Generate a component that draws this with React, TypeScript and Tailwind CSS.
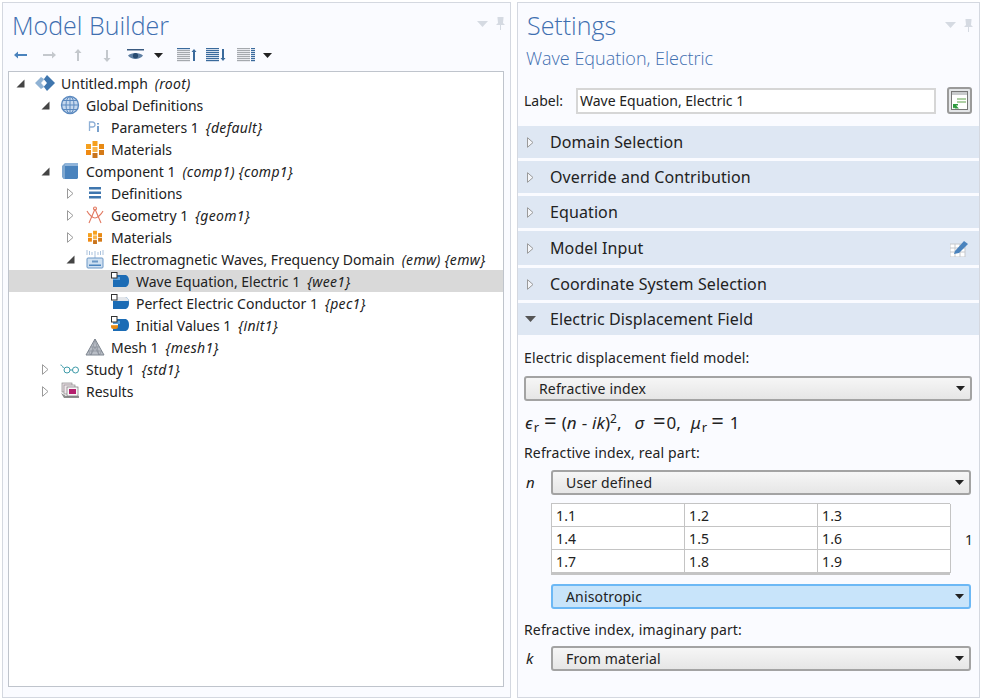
import type { ReactNode } from "react";

const SANS = "font-['Noto_Sans','Open_Sans',sans-serif]";

function Globe() {
  return (
    <svg width="20" height="20" viewBox="0 0 20 20" fill="none">
      <circle cx="10" cy="10" r="8.5" fill="#c5d8ee" stroke="#5b89bf" strokeWidth="1.4" />
      <ellipse cx="10" cy="10" rx="4" ry="8.5" stroke="#5b89bf" />
      <path d="M10 1.500v17M1.500 10h17M3 5.500h14M3 14.500h14" stroke="#5b89bf" />
    </svg>
  );
}

function RootIcon() {
  return (
    <svg width="22" height="18" viewBox="0 0 22 18" className="shrink-0">
      <path d="M7 9l6-8 8 8-8 8z" fill="#3f76ae" />
      <path d="M1 9l6-6 3 2-3 4 3 4-3 2z" fill="#8fb2d4" />
      <path d="M7 9l3-3.500 3 3.500-3 3.500z" fill="#ffffff" />
    </svg>
  );
}

function ParamIcon() {
  return (
    <svg width="14" height="14" viewBox="0 0 14 14">
      <path d="M1.500 11V2h3a2.200 2.200 0 010 5h-3" fill="none" stroke="#8fb0d6" strokeWidth="1.300" />
      <path d="M10 6v6" stroke="#4d82bd" strokeWidth="1.500" />
      <path d="M10 3v1.500" stroke="#4d82bd" strokeWidth="1.500" />
    </svg>
  );
}

function MaterialIcon({ small }: { small?: boolean }) {
  const s = small ? 14 : 18;
  return (
    <svg width={s} height={s} viewBox="0 0 18 18">
      <rect x="0" y="4" width="5" height="5" fill="#f5a01e" />
      <rect x="0" y="10" width="5" height="5" fill="#f08a12" />
      <rect x="6.500" y="1" width="5" height="5" fill="#f5a01e" />
      <rect x="6.500" y="7" width="5" height="5" fill="#f9b54a" />
      <rect x="6.500" y="13" width="5" height="5" fill="#c9741c" />
      <rect x="13" y="4" width="5" height="5" fill="#e88a14" />
      <rect x="13" y="10" width="5" height="5" fill="#d47a18" />
    </svg>
  );
}

function CubeIcon() {
  return (
    <svg width="16" height="16" viewBox="0 0 16 16">
      <path d="M3 0h13v3H3z" fill="#8fb4da" />
      <path d="M0 3l3-3v16l-1.500 0L0 14z" fill="#7ea7d0" />
      <path d="M3 3h13v12l-1 1H3z" fill="#4a83bd" />
    </svg>
  );
}

function DefsIcon() {
  return (
    <svg width="14" height="12" viewBox="0 0 14 12">
      <path d="M1 0h12v2.500H1zM1 4.500h12V7H1zM1 9h12v2.500H1z" fill="#3f76ae" />
    </svg>
  );
}

function GeomIcon() {
  return (
    <svg width="18" height="18" viewBox="0 0 18 18" fill="none" stroke="#e27a62" strokeWidth="1.100">
      <path d="M9 3L3 17M9 3l6 14" />
      <circle cx="9" cy="2.500" r="1.500" />
      <path d="M1 5c2 4 6 7 8 7s6-3 8-7" />
    </svg>
  );
}

function EmwIcon() {
  return (
    <svg width="18" height="20" viewBox="0 0 18 20">
      <path d="M1 1v5M3.500 2v4M6 3v3M12 3v3M14.500 2v4M17 1v5M9 2v8" stroke="#a9c1dc" strokeWidth="1" />
      <rect x="1" y="9" width="16" height="10" rx="1" fill="#cfe0f1" stroke="#6b97c6" />
      <rect x="3" y="15.500" width="12" height="1.500" fill="#4a83bd" />
      <rect x="6" y="11.500" width="6" height="2" fill="#6b97c6" />
    </svg>
  );
}

function NodeIcon({ kind }: { kind: "wee" | "pec" | "init" }) {
  return (
    <svg width="18" height="18" viewBox="0 0 18 18">
      <path d="M2 3h12c2.500 0 4 2.500 4 6s-1.500 6-4 6H2z" fill="#1c6cb5" />
      {kind === "pec" ? <path d="M2 3h12c2 0 3.200 1.500 3.700 4H2z" fill="#e3e6ea" /> : null}
      {kind !== "pec" ? <path d="M2 5h7v3H2z" fill="#5aa0dc" /> : null}
      <rect x="0.500" y="0.500" width="5.500" height="5.500" fill="#fff" stroke="#333" />
      {kind === "init" ? <path d="M0 8h7v2.500a2.500 2.500 0 01-2.500 2.500h-2A2.500 2.500 0 010 10.500z" fill="#e88a14" /> : null}
      {kind === "init" ? <path d="M0 8h7v1.200H0z" fill="#fff" /> : null}
    </svg>
  );
}

function MeshIcon() {
  return (
    <svg width="20" height="18" viewBox="0 0 20 18">
      <path d="M10 1L1 17h18z" fill="#b9bec6" stroke="#7f8791" />
      <path d="M10 1l-4 16M10 1l4 16M5.500 9h9M3.500 13h13M6 17l4-8 4 8M3.500 13l2 4M16.500 13l-2 4" fill="none" stroke="#7f8791" strokeWidth="0.600" />
    </svg>
  );
}

function StudyIcon() {
  return (
    <svg width="20" height="10" viewBox="0 0 20 10" fill="none" stroke="#3d9aa8" strokeWidth="1">
      <path d="M0.500 1c1 0 2 1 3 3" />
      <circle cx="7" cy="6" r="3" />
      <circle cx="15.500" cy="6" r="3" />
      <path d="M10 6h2.500" />
    </svg>
  );
}

function ResultsIcon() {
  return (
    <svg width="20" height="18" viewBox="0 0 20 18">
      <path d="M1 11l3 5h15v-2H6z" fill="#8d8d8d" />
      <rect x="2" y="1" width="10" height="9" fill="#e9dde3" stroke="#8a8a8a" strokeWidth="0.700" />
      <rect x="4" y="3" width="11" height="9" fill="#f1e7ec" stroke="#8a8a8a" strokeWidth="0.700" />
      <rect x="7" y="5" width="11" height="9" fill="#f7f7f7" stroke="#777" strokeWidth="0.700" />
      <rect x="9" y="7" width="7" height="5" fill="#b5206e" />
    </svg>
  );
}

function Open() {
  return (
    <svg width="9" height="9" viewBox="0 0 9 9">
      <path d="M8.500 0.500v8h-8z" fill="#444" />
    </svg>
  );
}

function Closed() {
  return (
    <svg width="7" height="11" viewBox="0 0 7 11">
      <path d="M0.500 0.700L6 5.500 0.500 10.300z" fill="#fff" stroke="#9a9a9a" />
    </svg>
  );
}

type Row = {
  level: 0 | 1 | 2 | 3;
  arrow?: "open" | "closed";
  icon: ReactNode;
  name: string;
  tag?: string;
  selected?: boolean;
};

const ROWS: Row[] = [
  { level: 0, arrow: "open", icon: <RootIcon />, name: "Untitled.mph", tag: "(root)" },
  { level: 1, arrow: "open", icon: <Globe />, name: "Global Definitions" },
  { level: 2, icon: <ParamIcon />, name: "Parameters 1", tag: "{default}" },
  { level: 2, icon: <MaterialIcon />, name: "Materials" },
  { level: 1, arrow: "open", icon: <CubeIcon />, name: "Component 1", tag: "(comp1) {comp1}" },
  { level: 2, arrow: "closed", icon: <DefsIcon />, name: "Definitions" },
  { level: 2, arrow: "closed", icon: <GeomIcon />, name: "Geometry 1", tag: "{geom1}" },
  { level: 2, arrow: "closed", icon: <MaterialIcon small />, name: "Materials" },
  { level: 2, arrow: "open", icon: <EmwIcon />, name: "Electromagnetic Waves, Frequency Domain", tag: "(emw) {emw}" },
  { level: 3, icon: <NodeIcon kind="wee" />, name: "Wave Equation, Electric 1", tag: "{wee1}", selected: true },
  { level: 3, icon: <NodeIcon kind="pec" />, name: "Perfect Electric Conductor 1", tag: "{pec1}" },
  { level: 3, icon: <NodeIcon kind="init" />, name: "Initial Values 1", tag: "{init1}" },
  { level: 2, icon: <MeshIcon />, name: "Mesh 1", tag: "{mesh1}" },
  { level: 1, arrow: "closed", icon: <StudyIcon />, name: "Study 1", tag: "{std1}" },
  { level: 1, arrow: "closed", icon: <ResultsIcon />, name: "Results" },
];

const INDENT = ["pl-[6px]", "pl-[31px]", "pl-[56px]", "pl-[81px]"];

function TreeRow({ row }: { row: Row }) {
  return (
    <div className={`flex h-[22px] items-center text-[14px] text-[#222] ${INDENT[row.level]} ${row.selected ? "bg-[#d9d9d9]" : ""}`}>
      <span className="flex w-[19px] shrink-0 items-center justify-center pr-[8px]">
        {row.arrow === "open" ? <Open /> : row.arrow === "closed" ? <Closed /> : null}
      </span>
      <span className="flex w-[27px] shrink-0 items-center justify-center pr-[6px]">{row.icon}</span>
      <span className="whitespace-nowrap">{row.name}</span>
      {row.tag ? <span className="ml-[7px] whitespace-nowrap italic tracking-[0.3px]">{row.tag}</span> : null}
    </div>
  );
}

function PanelControls() {
  return (
    <div className="flex items-center gap-[8px]">
      <svg width="11" height="6" viewBox="0 0 11 6"><path d="M0 0h11L5.500 6z" fill="#d5dae2" /></svg>
      <svg width="9" height="13" viewBox="0 0 9 13"><path d="M1.500 0h6v1L7 6l2 2H5v5H4V8H0l2-2-.5-5z" fill="#d5dae2" /></svg>
    </div>
  );
}

function ArrowIcon({ dir, on }: { dir: "left" | "right" | "up" | "down"; on?: boolean }) {
  const c = on ? "#4a83bd" : "#c4c8cd";
  const d = {
    left: "M1 6l4-3.500v2.500h9v2H5v2.500z",
    right: "M14 6l-4-3.500v2.500H1v2h9v2.500z",
    up: "M7 0l-3.500 4H6v8h2V4h2.500z",
    down: "M7 13l-3.500-4H6V1h2v8h2.500z",
  }[dir];
  return <svg width="15" height="13" viewBox="0 0 15 13"><path d={d} fill={c} /></svg>;
}

function Caret() {
  return <svg width="9" height="5" viewBox="0 0 9 5"><path d="M0 0h9L4.500 5z" fill="#222" /></svg>;
}

function EyeIcon() {
  return (
    <svg width="17" height="12" viewBox="0 0 17 12">
      <path d="M0 0h17v1.500H0z" fill="#3a5a80" />
      <path d="M1 6.500C4 3 13 3 16 6.500 13 11 4 11 1 6.500z" fill="#5e7fa3" />
      <circle cx="8.500" cy="6.700" r="2.600" fill="#274a70" />
    </svg>
  );
}

function ListIcon({ dark, arrow }: { dark?: boolean; arrow?: "up" | "down" }) {
  const c = dark ? "#3a6a9c" : "#a5a9ae";
  return (
    <svg width="20" height="14" viewBox="0 0 20 14">
      {[0, 2, 4, 6, 8, 10, 12].map((y) => (
        <rect key={y} x="0" y={y} width="13" height="1.200" fill={arrow === "up" && y === 0 ? "#3a6a9c" : c} />
      ))}
      {!arrow ? [0, 2, 4, 6, 8, 10, 12].map((y) => <rect key={y} x="14" y={y} width="4" height="1.200" fill="#3a6a9c" />) : null}
      {arrow === "up" ? <path d="M17 1l-2.500 3H16v9h2V4h1.500z" fill="#3a6a9c" /> : null}
      {arrow === "down" ? <path d="M17 13l-2.500-3H16V1h2v9h1.500z" fill="#3a6a9c" /> : null}
    </svg>
  );
}

function Section({ title, open, extra, h }: { title: string; open?: boolean; extra?: ReactNode; h: string }) {
  return (
    <div className={`flex items-center bg-[#dee7f3] text-[16px] tracking-[0.1px] text-[#222] ${h}`}>
      <span className="flex w-[32px] shrink-0 items-center justify-center pl-[3px] pr-[11px]">
        {open ? (
          <svg width="11" height="6" viewBox="0 0 11 6"><path d="M0 0h11L5.500 6z" fill="#555" /></svg>
        ) : (
          <svg width="7" height="11" viewBox="0 0 7 11"><path d="M0.500 0.700L6 5.500 0.500 10.300z" fill="#f4f6fa" stroke="#9a9a9a" /></svg>
        )}
      </span>
      <span>{title}</span>
      {extra ? <span className="ml-auto mr-[11px] flex">{extra}</span> : null}
    </div>
  );
}

function Select({ value, focus, full }: { value: string; focus?: boolean; full?: boolean }) {
  return (
    <div
      className={`flex h-[25px] items-center rounded-[3px] border-2 pl-[13px] pr-[5px] text-[14px] text-[#222] ${
        full ? "w-[448px]" : "w-[420px]"
      } ${focus ? "border-[#6cb8f5] bg-[#c8e4fa]" : "border-[#a3a3a3] bg-gradient-to-b from-[#f6f6f6] to-[#e6e6e6]"}`}
    >
      <span>{value}</span>
      <span className="ml-auto flex"><Caret /></span>
    </div>
  );
}

function GridCell({ v }: { v: string }) {
  return <div className="flex h-[23px] items-center border-r border-b border-[#c4c4c4] bg-white pl-[4px] text-[14px] text-[#222]">{v}</div>;
}

export default function App() {
  return (
    <div className={`flex h-[700px] w-[981px] gap-[6px] overflow-hidden bg-white pl-[2px] pt-[2px] ${SANS}`}>
      {/* model builder */}
      <div className="flex h-[696px] w-[509px] flex-col border border-[#d4d8e0] bg-[#fafbff] pl-[5px] pr-[6px]">
        <div className="flex h-[39px] items-center justify-between pl-[4px]">
          <div className="mt-[6px] font-['Open_Sans',sans-serif] text-[25px] font-light text-[#3f6fb0]">Model Builder</div>
          <div className="mr-[-1px] mt-[2px]"><PanelControls /></div>
        </div>
        <div className="flex h-[26px] items-center pl-[5px]">
          <span className="w-[29px]"><ArrowIcon dir="left" on /></span>
          <span className="w-[29px]"><ArrowIcon dir="right" /></span>
          <span className="w-[29px]"><ArrowIcon dir="up" /></span>
          <span className="w-[27px]"><ArrowIcon dir="down" /></span>
          <span className="flex w-[50px] items-center gap-[10px]"><EyeIcon /><Caret /></span>
          <span className="w-[29px]"><ListIcon arrow="up" /></span>
          <span className="w-[31px]"><ListIcon dark arrow="down" /></span>
          <span className="flex items-center gap-[6px]"><ListIcon /><Caret /></span>
        </div>
        <div className="mt-[3px] h-[616px] border border-[#bfc4cc] bg-white">
          {ROWS.map((r) => (
            <TreeRow key={r.name + r.level + (r.arrow ?? "")} row={r} />
          ))}
        </div>
      </div>

      {/* settings */}
      <div className="flex h-[696px] w-[463px] flex-col border border-[#d4d8e0] bg-[#fafbff]">
        <div className="flex h-[42px] items-center justify-between pl-[9px] pr-[6px]">
          <div className="mt-[3px] font-['Open_Sans',sans-serif] text-[25px] font-light text-[#3f6fb0]">Settings</div>
          <div className="mt-[2px]"><PanelControls /></div>
        </div>
        <div className="mt-[1px] pl-[8px] font-['Open_Sans',sans-serif] text-[18px] font-light leading-[24px] text-[#3f6fb0]">Wave Equation, Electric</div>
        <div className="mt-[17px] flex h-[27px] items-center pl-[6px]">
          <span className="w-[52px] text-[14px] text-[#222]">Label:</span>
          <div className="flex h-[26px] w-[360px] items-center border-2 border-[#d6d6d6] bg-white pl-[2px] text-[14px] text-[#222]">Wave Equation, Electric 1</div>
          <div className="ml-[11px] flex h-[27px] w-[25px] items-center justify-center rounded-[3px] border-2 border-[#9a9a9a] bg-[#e4e6e8]">
            <svg width="17" height="19" viewBox="0 0 17 19">
              <rect x="0.500" y="0.500" width="16" height="18" fill="#fff" stroke="#777" />
              <rect x="1" y="1" width="15" height="3" fill="#c8cacc" />
              <path d="M6 8h9M6 11h9" stroke="#5fa04a" />
              <path d="M2 13h5v1.500H5l3 3H4l-1-1-1 1z" fill="#2e9a3e" />
            </svg>
          </div>
        </div>
        <div className="mt-[12px] flex flex-col gap-[3px]">
          <Section title="Domain Selection" h="h-[32px]" />
          <Section title="Override and Contribution" h="h-[32px]" />
          <Section title="Equation" h="h-[32px]" />
          <Section
            title="Model Input"
            h="h-[34px]"
            extra={
              <svg width="18" height="17" viewBox="0 0 18 17">
                <path d="M0 4h15v13H0z" fill="#fff" stroke="#c5c8cc" />
                <path d="M0 8h15M0 12h15M5 4v13M10 4v13" stroke="#c5c8cc" />
                <path d="M5 11l9-10 4 3-9 9-5 1z" fill="#4a83bd" />
              </svg>
            }
          />
          <Section title="Coordinate System Selection" h="h-[32px]" />
          <Section title="Electric Displacement Field" open h="h-[32px]" />
        </div>
        <div className="flex flex-col pl-[6px] text-[14px] tracking-[0.15px] text-[#222]">
          <div className="mt-[13px] leading-[20px]">Electric displacement field model:</div>
          <div className="mt-[8px]"><Select value="Refractive index" full /></div>
          <div className="mt-[8px] h-[24px] whitespace-nowrap pl-[1px] text-[17px] leading-[24px] tracking-normal">
            <span className="italic">ϵ</span>
            <sub className="ml-[1px] text-[13px]">r</sub>
            <span className="mx-[5px] text-[22px] leading-none">=</span>
            <span>(</span>
            <span className="italic">n</span>
            <span className="mx-[5px]">-</span>
            <span className="italic">ik</span>
            <span>)</span>
            <sup className="text-[12px]">2</sup>
            <span>,</span>
            <span className="ml-[13px] italic">σ</span>
            <span className="ml-[9px] text-[22px] leading-none">=</span>
            <span className="ml-[1px]">0,</span>
            <span className="ml-[10px] italic">μ</span>
            <sub className="ml-[1px] text-[13px]">r</sub>
            <span className="mx-[4px] text-[22px] leading-none">=</span>
            <span className="ml-[2px]">1</span>
          </div>
          <div className="mt-[10px] leading-[20px]">Refractive index, real part:</div>
          <div className="mt-[7px] flex items-center">
            <span className="w-[27px] pl-[2px] text-[15px] italic">n</span>
            <Select value="User defined" />
          </div>
          <div className="mt-[8px] flex items-center pl-[27px]">
            <div className="grid w-[399px] grid-cols-[133px_133px_133px] border-t border-l border-[#c4c4c4] border-b-2 border-r-2">
              {["1.1", "1.2", "1.3", "1.4", "1.5", "1.6", "1.7", "1.8", "1.9"].map((v) => (
                <GridCell key={v} v={v} />
              ))}
            </div>
            <span className="ml-[15px]">1</span>
          </div>
          <div className="ml-[27px] mt-[9px]"><Select value="Anisotropic" focus /></div>
          <div className="mt-[11px] leading-[20px]">Refractive index, imaginary part:</div>
          <div className="mt-[6px] flex items-center">
            <span className="w-[27px] pl-[2px] text-[15px] italic">k</span>
            <Select value="From material" />
          </div>
        </div>
      </div>
    </div>
  );
}
